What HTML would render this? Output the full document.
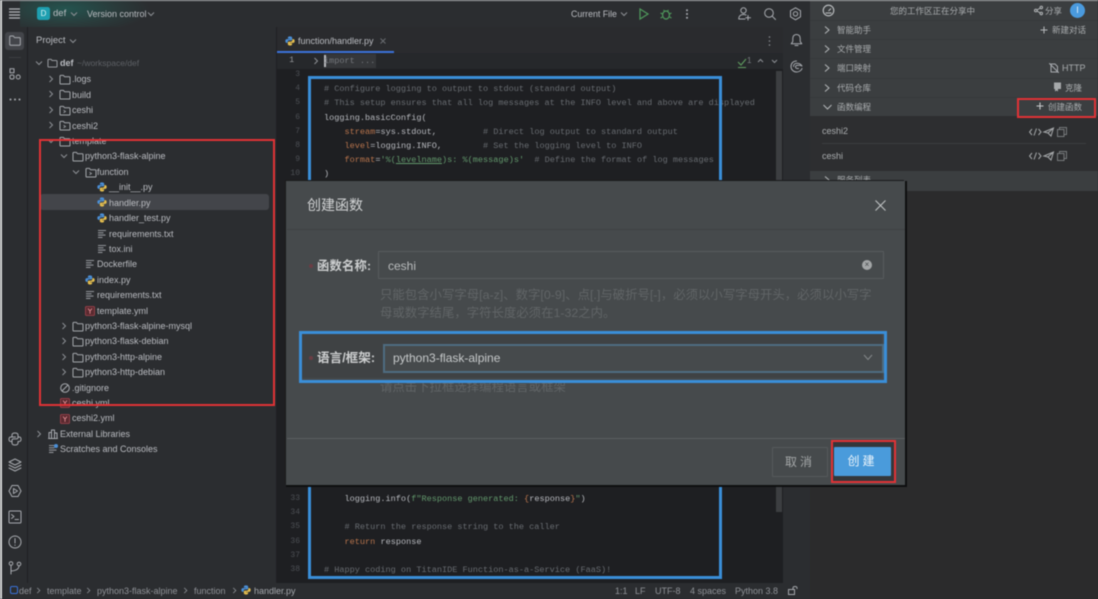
<!DOCTYPE html>
<html lang="zh">
<head>
<meta charset="utf-8">
<title>创建函数</title>
<style>
html,body{margin:0;padding:0;background:#2b2d30;overflow:hidden}
#r{position:relative;width:1098px;height:599px;overflow:hidden;background:#2b2d30;font-family:"Liberation Sans","Noto Sans CJK SC",sans-serif;color:#bcbec4;filter:blur(.4px)}
#r div,#r span.a,#r svg.a{position:absolute}
.t{font-size:9px;line-height:12px;height:12px;white-space:nowrap;color:#babcc1}
.c{font-family:"Liberation Mono",monospace;font-size:8.55px;line-height:12px;height:12px;white-space:pre;color:#b8babf}
.g{color:#686c71}.o{color:#b8744c}.s{color:#62986c}
.n{font-family:"Liberation Mono",monospace;font-size:8px;line-height:12px;height:12px;color:#4c4f54;width:20px;text-align:right;left:280px}
.z{font-size:8.5px;line-height:14px;height:14px;white-space:nowrap;color:#a9acae}
.l{font-size:9px}
svg{overflow:visible}
.ic{fill:none;stroke:#a8abb0;stroke-width:1;stroke-linecap:round;stroke-linejoin:round}
</style>
</head>
<body>
<div id="r">
<svg width="0" height="0" style="position:absolute">
<symbol id="py" viewBox="0 0 12 12"><path d="M6 .5C4 .5 3.5 1.2 3.5 2.2V3.3H6.2V3.8H2.2C1 3.8.4 4.7.4 6S1 8.3 2.2 8.3H3.2V7C3.2 5.9 4 5.3 5 5.3H7.3C8 5.3 8.6 4.8 8.6 4V2.2C8.6 1.2 7.8.5 6 .5Z" fill="#4b8fd6"/><path d="M6 11.5C8 11.5 8.5 10.8 8.5 9.8V8.7H5.8V8.2H9.8C11 8.2 11.6 7.3 11.6 6S11 3.7 9.8 3.7H8.8V5C8.8 6.1 8 6.7 7 6.7H4.7C4 6.7 3.4 7.2 3.4 8V9.8C3.4 10.8 4.2 11.5 6 11.5Z" fill="#e3bd4f"/></symbol>
<symbol id="fo" viewBox="0 0 12 11"><path d="M1 3V9.2C1 9.7 1.3 10 1.8 10H10.2C10.7 10 11 9.7 11 9.2V3.6C11 3.1 10.7 2.8 10.2 2.8H5.6L4.4 1.4H1.8C1.3 1.4 1 1.7 1 2.2Z" fill="none" stroke="#a4a7ac" stroke-width="1"/></symbol>
<symbol id="fp" viewBox="0 0 12 11"><path d="M1 3V9.2C1 9.7 1.3 10 1.8 10H10.2C10.7 10 11 9.7 11 9.2V3.6C11 3.1 10.7 2.8 10.2 2.8H5.6L4.4 1.4H1.8C1.3 1.4 1 1.7 1 2.2Z" fill="none" stroke="#a4a7ac" stroke-width="1"/><path d="M4.5 5.2L6.5 6.5L4.5 7.8" fill="none" stroke="#a4a7ac" stroke-width=".8"/></symbol>
<symbol id="tx" viewBox="0 0 10 10"><path d="M1 1.5H9M1 3.8H6.5M1 6.1H8.5M1 8.4H5.5" fill="none" stroke="#8f9297" stroke-width="1.1"/></symbol>
<symbol id="ya" viewBox="0 0 10 10"><rect x=".5" y=".5" width="9" height="9" rx="1" fill="#5a2a30" stroke="#a8454f" stroke-width=".8"/><path d="M3 2.5L5 5L7 2.5M5 5V7.8" fill="none" stroke="#e08a90" stroke-width=".9"/></symbol>
<symbol id="ar" viewBox="0 0 8 8"><path d="M2.5 1L5.5 4L2.5 7" fill="none" stroke="#8d9095" stroke-width="1"/></symbol>
<symbol id="dn" viewBox="0 0 8 8"><path d="M1 2.5L4 5.5L7 2.5" fill="none" stroke="#8d9095" stroke-width="1"/></symbol>
<symbol id="tools" viewBox="0 0 38 10"><path d="M3 2L.5 5L3 8M7.5 1.5L5 8.5M9.5 2L12 5L9.5 8" fill="none" stroke="#a6a9ab" stroke-width="1"/><path d="M15 5L24.5 1L22 9L19 6ZM19 6L24.5 1" fill="none" stroke="#a6a9ab" stroke-width="1"/><rect x="28.5" y="2.5" width="6.5" height="7" fill="none" stroke="#777a7c" stroke-width="1"/><path d="M30.5 2.5V.5H37.5V7.5H35" fill="none" stroke="#777a7c" stroke-width="1"/></symbol>
</svg>

<!-- edges -->
<div style="left:0;top:0;width:1098px;height:1px;background:#a9abad"></div>
<div style="left:0;top:0;width:2px;height:599px;background:#d8d9da"></div>

<!-- toolbar -->
<div style="left:2px;top:1px;width:808px;height:26px;background:#2b2d30"></div>
<div style="left:20px;top:1px;width:170px;height:26px;background:radial-gradient(ellipse 85px 26px at 45px 8px,#24544f 0%,#2a3b3b 60%,#2b2d30 100%)"></div>
<svg class="a" style="left:9px;top:8px" width="11" height="11"><path d="M0 1H11M0 4H11M0 7H11M0 10H11" stroke="#b5b7bb" stroke-width="1.2"/></svg>
<div style="left:37px;top:7px;width:13px;height:13px;border-radius:2.5px;background:#1e9fb0;color:#d7f4f6;font-size:8px;line-height:13px;text-align:center">D</div>
<div class="t" style="left:53px;top:8px;font-size:9.5px">def</div>
<svg class="a" style="left:70px;top:10px" width="8" height="8"><use href="#dn"/></svg>
<div class="t" style="left:87px;top:8px;font-size:9px">Version control</div>
<svg class="a" style="left:147px;top:10px" width="8" height="8"><use href="#dn"/></svg>
<div class="t" style="left:571px;top:8px;font-size:8.8px">Current File</div>
<svg class="a" style="left:620px;top:10px" width="8" height="8"><use href="#dn"/></svg>
<svg class="a" style="left:639px;top:8px" width="10" height="12"><path d="M1 1L9 6L1 11Z" fill="none" stroke="#4f9a5c" stroke-width="1.2"/></svg>
<svg class="a" style="left:660px;top:8px" width="12" height="12"><ellipse cx="6" cy="7" rx="3.4" ry="4" fill="none" stroke="#4f9a5c" stroke-width="1.2"/><path d="M3.5 2L5 3.5M8.5 2L7 3.5M.5 5L2.5 6M11.5 5L9.5 6M.5 10L2.5 9M11.5 10L9.5 9" stroke="#4f9a5c" stroke-width="1"/></svg>
<svg class="a" style="left:685px;top:9px" width="4" height="10"><circle cx="2" cy="1.2" r="1" fill="#a8abb0"/><circle cx="2" cy="5" r="1" fill="#a8abb0"/><circle cx="2" cy="8.8" r="1" fill="#a8abb0"/></svg>
<svg class="a ic" style="left:738px;top:7px" width="13" height="14"><circle cx="5.5" cy="3.5" r="2.7"/><path d="M.8 12C.8 8.8 3 7.5 5.5 7.5C6.5 7.5 7.4 7.7 8 8M.8 12H7M10 8.5V13M7.8 10.8H12.5"/></svg>
<svg class="a ic" style="left:764px;top:8px" width="12" height="12"><circle cx="5" cy="5" r="4.3"/><path d="M8.2 8.2L11.5 11.5"/></svg>
<svg class="a ic" style="left:789px;top:7px" width="13" height="14"><path d="M6.5 .8L11.5 3.7V9.8L6.5 12.8L1.5 9.8V3.7Z"/><circle cx="6.5" cy="6.8" r="2.2"/></svg>

<!-- left stripe -->
<div style="left:5px;top:32px;width:19px;height:18px;border-radius:3px;background:#43454a"></div>
<svg class="a ic" style="left:9px;top:35px" width="12" height="11"><path d="M.7 2V9.3C.7 9.8 1 10.2 1.6 10.2H10.4C11 10.2 11.3 9.8 11.3 9.3V3.5C11.3 3 11 2.6 10.4 2.6H5.5L4.4 1H1.6C1 1 .7 1.4 .7 2Z"/></svg>
<div style="left:9px;top:57px;width:12px;height:1px;background:#3c3e42"></div>
<svg class="a ic" style="left:9px;top:68px" width="12" height="12"><rect x="1" y=".7" width="4" height="4"/><rect x="1" y="7" width="4" height="4" rx="1.5"/><rect x="7.2" y="7" width="4" height="4" rx="2"/></svg>
<svg class="a" style="left:9px;top:98px" width="12" height="3"><circle cx="1.5" cy="1.5" r="1" fill="#a8abb0"/><circle cx="6" cy="1.5" r="1" fill="#a8abb0"/><circle cx="10.5" cy="1.5" r="1" fill="#a8abb0"/></svg>
<svg class="a ic" style="left:8px;top:432px" width="14" height="14"><path d="M7 1C4.5 1 4 2 4 3V5H7.5M10 5V3C10 2 9.5 1 7 1M4 5H2.8C1.5 5 1 6 1 7.3S1.5 9.5 2.8 9.5H4V8.3C4 7.4 4.6 6.9 5.5 6.9H8.5C9.4 6.9 10 6.4 10 5.5V5H11.2C12.5 5 13 6 13 7.3S12.5 9.5 11.2 9.5H10M10 9.5V11C10 12 9.5 13 7 13S4 12 4 11V9.5"/></svg>
<svg class="a ic" style="left:8px;top:458px" width="14" height="14"><path d="M7 1L13 4L7 7L1 4ZM1 7L7 10L13 7M1 10L7 13L13 10"/></svg>
<svg class="a ic" style="left:8px;top:484px" width="14" height="14"><path d="M4 1.5H10L13 7L10 12.5H4L1 7Z"/><path d="M5.5 4.5L9.5 7L5.5 9.5Z"/></svg>
<svg class="a ic" style="left:8px;top:510px" width="14" height="14"><rect x="1" y="1" width="12" height="12" rx="1"/><path d="M3.5 4.5L6 6.5L3.5 8.5M7 9.5H10.5"/></svg>
<svg class="a ic" style="left:8px;top:535px" width="14" height="14"><circle cx="7" cy="7" r="6"/><path d="M7 3.5V8M7 10V10.4"/></svg>
<svg class="a ic" style="left:8px;top:561px" width="14" height="14"><circle cx="3" cy="2.5" r="1.8"/><circle cx="11" cy="3" r="1.8"/><path d="M3 4.3V13M3 10C6 10 11 9 11 4.8"/></svg>

<!-- project panel -->
<div style="left:27px;top:27px;width:1px;height:556px;background:#1f2023"></div>
<div style="left:276px;top:27px;width:1px;height:556px;background:#1f2023"></div>
<div class="t" style="left:36px;top:35px;font-size:9.5px">Project</div>
<svg class="a" style="left:69px;top:37px" width="8" height="8"><use href="#dn"/></svg>

<div style="left:40px;top:194px;width:229px;height:16px;border-radius:3px;background:#43454a"></div>

<svg class="a" style="left:35px;top:59px" width="8" height="8"><use href="#dn"/></svg>
<svg class="a" style="left:47px;top:58px" width="11" height="10"><use href="#fo"/></svg>
<div class="t" style="left:60px;top:57px;font-weight:bold">def</div>
<div class="t" style="left:77px;top:57px;color:#5d6065;font-size:8.5px">~/workspace/def</div>

<svg class="a" style="left:47px;top:75px" width="8" height="8"><use href="#ar"/></svg>
<svg class="a" style="left:59px;top:74px" width="12" height="11"><use href="#fo"/></svg>
<div class="t" style="left:72px;top:73px">.logs</div>
<svg class="a" style="left:47px;top:90px" width="8" height="8"><use href="#ar"/></svg>
<svg class="a" style="left:59px;top:89px" width="12" height="11"><use href="#fo"/></svg>
<div class="t" style="left:72px;top:89px">build</div>
<svg class="a" style="left:47px;top:106px" width="8" height="8"><use href="#ar"/></svg>
<svg class="a" style="left:59px;top:105px" width="12" height="11"><use href="#fp"/></svg>
<div class="t" style="left:72px;top:104px">ceshi</div>
<svg class="a" style="left:47px;top:121px" width="8" height="8"><use href="#ar"/></svg>
<svg class="a" style="left:59px;top:120px" width="12" height="11"><use href="#fp"/></svg>
<div class="t" style="left:72px;top:120px">ceshi2</div>
<svg class="a" style="left:47px;top:137px" width="8" height="8"><use href="#dn"/></svg>
<svg class="a" style="left:59px;top:136px" width="12" height="11"><use href="#fo"/></svg>
<div class="t" style="left:72px;top:135px">template</div>
<svg class="a" style="left:60px;top:152px" width="8" height="8"><use href="#dn"/></svg>
<svg class="a" style="left:72px;top:151px" width="12" height="11"><use href="#fo"/></svg>
<div class="t" style="left:85px;top:150px">python3-flask-alpine</div>
<svg class="a" style="left:72px;top:168px" width="8" height="8"><use href="#dn"/></svg>
<svg class="a" style="left:85px;top:167px" width="12" height="11"><use href="#fp"/></svg>
<div class="t" style="left:97px;top:166px">function</div>
<svg class="a" style="left:97px;top:182px" width="10" height="10"><use href="#py"/></svg>
<div class="t" style="left:109px;top:181px">__init__.py</div>
<svg class="a" style="left:97px;top:197px" width="10" height="10"><use href="#py"/></svg>
<div class="t" style="left:109px;top:197px">handler.py</div>
<svg class="a" style="left:97px;top:213px" width="10" height="10"><use href="#py"/></svg>
<div class="t" style="left:109px;top:212px">handler_test.py</div>
<svg class="a" style="left:97px;top:229px" width="10" height="10"><use href="#tx"/></svg>
<div class="t" style="left:109px;top:228px">requirements.txt</div>
<svg class="a" style="left:97px;top:244px" width="10" height="10"><use href="#tx"/></svg>
<div class="t" style="left:109px;top:243px">tox.ini</div>
<svg class="a" style="left:85px;top:259px" width="10" height="10"><use href="#tx"/></svg>
<div class="t" style="left:97px;top:258px">Dockerfile</div>
<svg class="a" style="left:85px;top:275px" width="10" height="10"><use href="#py"/></svg>
<div class="t" style="left:97px;top:274px">index.py</div>
<svg class="a" style="left:85px;top:290px" width="10" height="10"><use href="#tx"/></svg>
<div class="t" style="left:97px;top:289px">requirements.txt</div>
<svg class="a" style="left:85px;top:306px" width="10" height="10"><use href="#ya"/></svg>
<div class="t" style="left:97px;top:305px">template.yml</div>
<svg class="a" style="left:60px;top:322px" width="8" height="8"><use href="#ar"/></svg>
<svg class="a" style="left:72px;top:321px" width="12" height="11"><use href="#fo"/></svg>
<div class="t" style="left:85px;top:320px">python3-flask-alpine-mysql</div>
<svg class="a" style="left:60px;top:337px" width="8" height="8"><use href="#ar"/></svg>
<svg class="a" style="left:72px;top:336px" width="12" height="11"><use href="#fo"/></svg>
<div class="t" style="left:85px;top:335px">python3-flask-debian</div>
<svg class="a" style="left:60px;top:353px" width="8" height="8"><use href="#ar"/></svg>
<svg class="a" style="left:72px;top:352px" width="12" height="11"><use href="#fo"/></svg>
<div class="t" style="left:85px;top:351px">python3-http-alpine</div>
<svg class="a" style="left:60px;top:368px" width="8" height="8"><use href="#ar"/></svg>
<svg class="a" style="left:72px;top:367px" width="12" height="11"><use href="#fo"/></svg>
<div class="t" style="left:85px;top:366px">python3-http-debian</div>
<svg class="a ic" style="left:60px;top:383px" width="10" height="10"><circle cx="5" cy="5" r="4.3"/><path d="M2 8L8 2"/></svg>
<div class="t" style="left:72px;top:382px">.gitignore</div>
<svg class="a" style="left:60px;top:398px" width="10" height="10"><use href="#ya"/></svg>
<div class="t" style="left:72px;top:397px">ceshi.yml</div>
<svg class="a" style="left:60px;top:414px" width="10" height="10"><use href="#ya"/></svg>
<div class="t" style="left:72px;top:412px">ceshi2.yml</div>
<svg class="a" style="left:35px;top:430px" width="8" height="8"><use href="#ar"/></svg>
<svg class="a ic" style="left:48px;top:429px" width="10" height="10"><path d="M1 9V3.5H3.5V9M3.5 9V1H6.5V9M6.5 9V4H9V9M.5 9.5H9.5"/></svg>
<div class="t" style="left:60px;top:428px">External Libraries</div>
<svg class="a" style="left:48px;top:444px" width="10" height="10"><use href="#tx"/><circle cx="8" cy="2" r="2" fill="#4b8fd6"/></svg>
<div class="t" style="left:60px;top:443px">Scratches and Consoles</div>

<!-- editor -->
<div style="left:277px;top:27px;width:506px;height:26px;background:#2a2b2e"></div>
<svg class="a" style="left:285px;top:36px" width="10" height="10"><use href="#py"/></svg>
<div class="t" style="left:298px;top:35px">function/handler.py</div>
<svg class="a" style="left:380px;top:38px" width="6" height="6"><path d="M.5 .5L5.5 5.5M5.5 .5L.5 5.5" stroke="#6c6f74" stroke-width=".9"/></svg>
<div style="left:277px;top:51px;width:117px;height:2px;background:#3b72d9"></div>
<svg class="a" style="left:768px;top:36px" width="3" height="10"><circle cx="1.5" cy="1" r=".8" fill="#8d9095"/><circle cx="1.5" cy="5" r=".8" fill="#8d9095"/><circle cx="1.5" cy="9" r=".8" fill="#8d9095"/></svg>
<div style="left:277px;top:53px;width:506px;height:530px;background:#1e1f22"></div>
<div style="left:277px;top:53px;width:506px;height:16px;background:#26282b"></div>
<div class="n" style="left:278px;top:55px;width:16px;color:#9a9ca0">1</div>
<svg class="a" style="left:312px;top:57px" width="8" height="8"><use href="#ar"/></svg>
<div style="left:324px;top:54px;width:52px;height:14px;background:#35373a"></div>
<div style="left:324px;top:55px;width:1.5px;height:12px;background:#b7b9bd"></div>
<div class="c g" style="left:324px;top:55px;color:#74777c">import ...</div>
<svg class="a" style="left:737px;top:58px" width="13" height="11"><path d="M1 4L4 7L9 1M1 9.5H9" fill="none" stroke="#5f9a5f" stroke-width="1.1"/></svg>
<div class="t" style="left:747px;top:55px;font-size:8px;color:#7a7d82">1</div>
<svg class="a" style="left:757px;top:58px" width="7" height="6"><path d="M1 4L3.5 1.5L6 4" fill="none" stroke="#8d9095"/></svg>
<svg class="a" style="left:771px;top:58px" width="7" height="6"><path d="M1 2L3.5 4.5L6 2" fill="none" stroke="#8d9095"/></svg>
<div style="left:776px;top:71px;width:6px;height:441px;background:#3c3e41"></div>

<div class="n" style="top:69px">3</div>
<div class="n" style="top:83px">4</div>
<div class="c g" style="left:324px;top:83px"># Configure logging to output to stdout (standard output)</div>
<div class="n" style="top:97px">5</div>
<div class="c g" style="left:324px;top:97px"># This setup ensures that all log messages at the INFO level and above are displayed</div>
<div class="n" style="top:112px">6</div>
<div class="c" style="left:324px;top:112px">logging.basicConfig(</div>
<div class="n" style="top:126px">7</div>
<div class="c" style="left:324px;top:126px">    <span class="o">stream</span>=sys.stdout,         <span class="g"># Direct log output to standard output</span></div>
<div class="n" style="top:140px">8</div>
<div class="c" style="left:324px;top:140px">    <span class="o">level</span>=logging.INFO,        <span class="g"># Set the logging level to INFO</span></div>
<div class="n" style="top:154px">9</div>
<div class="c" style="left:324px;top:154px">    <span class="o">format</span>=<span class="s">'%(<u>levelname</u>)s: %(message)s'</span>  <span class="g"># Define the format of log messages</span></div>
<div class="n" style="top:168px">10</div>
<div class="c" style="left:324px;top:168px">)</div>

<div class="n" style="top:493px">33</div>
<div class="c" style="left:324px;top:493px">    logging.info(<span class="s">f"Response generated: </span><span class="o">{</span>response<span class="o">}</span><span class="s">"</span>)</div>
<div class="n" style="top:507px">34</div>
<div class="n" style="top:521px">35</div>
<div class="c g" style="left:324px;top:521px">    # Return the response string to the caller</div>
<div class="n" style="top:536px">36</div>
<div class="c" style="left:324px;top:536px">    <span class="o">return</span> response</div>
<div class="n" style="top:550px">37</div>
<div class="n" style="top:564px">38</div>
<div class="c g" style="left:324px;top:564px"># Happy coding on TitanIDE Function-as-a-Service (FaaS)!</div>

<!-- blue editor box -->
<div style="left:308px;top:76px;width:408px;height:497px;border:3px solid #3a8ed8"></div>

<!-- right stripe -->
<div style="left:783px;top:27px;width:27px;height:556px;background:#2b2d30"></div>
<svg class="a ic" style="left:790px;top:33px" width="13" height="14"><path d="M6.5 1.5C4 1.5 2.8 3.2 2.8 5.5V8.5L1.2 10.8H11.8L10.2 8.5V5.5C10.2 3.2 9 1.5 6.5 1.5ZM5 12.5H8"/></svg>
<svg class="a ic" style="left:790px;top:60px" width="13" height="13"><path d="M6.5 1C3 1 1 3.5 1 6.5S3.5 12 6.5 12C9 12 11.5 10.5 12 8.5M3.5 6.5C3.5 4.5 5 3.2 7 3.2S11 4.3 12 6C11 5.5 10 5.3 8.5 5.3C6.5 5.3 5.5 6 5.5 7C5.5 8.2 7 8.7 8.5 8.5"/></svg>

<!-- right panel -->
<div style="left:810px;top:1px;width:288px;height:115px;background:#3b3e40"></div>
<div style="left:810px;top:116px;width:288px;height:55px;background:#2d2e30"></div>
<div style="left:810px;top:171px;width:288px;height:20px;background:#3b3e40"></div>
<div style="left:810px;top:191px;width:288px;height:408px;background:#2b2b2c"></div>
<div style="left:810px;top:20px;width:288px;height:1px;background:#36393b"></div>
<div style="left:810px;top:39px;width:288px;height:1px;background:#36393b"></div>
<div style="left:810px;top:58px;width:288px;height:1px;background:#36393b"></div>
<div style="left:810px;top:78px;width:288px;height:1px;background:#36393b"></div>
<div style="left:810px;top:97px;width:288px;height:1px;background:#36393b"></div>
<svg class="a" style="left:822px;top:4px" width="13" height="13"><circle cx="6.5" cy="6.5" r="5.3" fill="none" stroke="#bfc2c4" stroke-width="1.1"/><path d="M3.5 9H9.5M6.5 7L9 4.5" stroke="#bfc2c4" stroke-width="1"/></svg>
<div class="z" style="left:890px;top:4px">您的工作区正在分享中</div>
<svg class="a" style="left:1034px;top:6px" width="9" height="9"><circle cx="1.8" cy="4.5" r="1.3" fill="none" stroke="#b5b8ba"/><circle cx="7.3" cy="1.5" r="1.2" fill="none" stroke="#b5b8ba"/><circle cx="7.3" cy="7.5" r="1.2" fill="none" stroke="#b5b8ba"/><path d="M3 4L6.2 2M3 5L6.2 7" stroke="#b5b8ba" stroke-width=".9"/></svg>
<div class="z" style="left:1045px;top:4px">分享</div>
<div style="left:1070px;top:3px;width:15px;height:15px;border-radius:50%;background:#4a9ade;color:#e5f2fb;font-size:9px;line-height:15px;text-align:center">I</div>

<svg class="a" style="left:823px;top:26px" width="8" height="8"><path d="M2 .5L6 4L2 7.5" fill="none" stroke="#b5b8ba"/></svg>
<div class="z" style="left:837px;top:23px">智能助手</div>
<svg class="a" style="left:1040px;top:26px" width="8" height="8"><path d="M4 .5V7.5M.5 4H7.5" stroke="#b5b8ba"/></svg>
<div class="z" style="left:1052px;top:23px">新建对话</div>
<svg class="a" style="left:823px;top:45px" width="8" height="8"><path d="M2 .5L6 4L2 7.5" fill="none" stroke="#b5b8ba"/></svg>
<div class="z" style="left:837px;top:42px">文件管理</div>
<svg class="a" style="left:823px;top:64px" width="8" height="8"><path d="M2 .5L6 4L2 7.5" fill="none" stroke="#b5b8ba"/></svg>
<div class="z" style="left:837px;top:61px">端口映射</div>
<svg class="a ic" style="left:1049px;top:63px" width="10" height="10"><path d="M2 1H6L8.5 3.5V9H2ZM.5 .5L9.5 9.5"/></svg>
<div class="z l" style="left:1062px;top:61px">HTTP</div>
<svg class="a" style="left:823px;top:84px" width="8" height="8"><path d="M2 .5L6 4L2 7.5" fill="none" stroke="#b5b8ba"/></svg>
<div class="z" style="left:837px;top:81px">代码仓库</div>
<svg class="a" style="left:1053px;top:82px" width="9" height="10"><path d="M1 .5H8V7H5V9.5L3.5 8.5L2 9.5V7H1Z" fill="#a6a9ab"/></svg>
<div class="z" style="left:1065px;top:81px">克隆</div>
<svg class="a" style="left:823px;top:103px" width="9" height="8"><path d="M.5 2L4.5 6L8.5 2" fill="none" stroke="#b5b8ba"/></svg>
<div class="z" style="left:837px;top:100px">函数编程</div>
<svg class="a" style="left:1036px;top:102px" width="8" height="8"><path d="M4 .5V7.5M.5 4H7.5" stroke="#c8cacc" stroke-width="1.1"/></svg>
<div class="z" style="left:1048px;top:100px">创建函数</div>
<div style="left:1017px;top:98px;width:75px;height:16px;border:2.5px solid #e03236"></div>

<div class="z l" style="left:822px;top:124px">ceshi2</div>
<svg class="a" style="left:1029px;top:127px" width="38" height="10"><use href="#tools"/></svg>
<div style="left:822px;top:143px;width:264px;height:1px;background:#3b3d3f"></div>
<div class="z l" style="left:822px;top:149px">ceshi</div>
<svg class="a" style="left:1029px;top:151px" width="38" height="10"><use href="#tools"/></svg>
<svg class="a" style="left:823px;top:176px" width="8" height="8"><path d="M2 .5L6 4L2 7.5" fill="none" stroke="#b5b8ba"/></svg>
<div class="z" style="left:837px;top:173px">服务列表</div>

<!-- status bar -->
<div style="left:2px;top:583px;width:808px;height:16px;background:#2b2d30"></div>
<div class="t" style="left:10px;top:586px;width:6px;height:6px;border:1px solid #3a72d9;border-radius:2px"></div>
<div class="t" style="left:19px;top:585px;color:#8f9297">def</div>
<svg class="a" style="left:35px;top:587px" width="7" height="7"><use href="#ar"/></svg>
<div class="t" style="left:47px;top:585px;color:#8f9297">template</div>
<svg class="a" style="left:85px;top:587px" width="7" height="7"><use href="#ar"/></svg>
<div class="t" style="left:97px;top:585px;color:#8f9297">python3-flask-alpine</div>
<svg class="a" style="left:182px;top:587px" width="7" height="7"><use href="#ar"/></svg>
<div class="t" style="left:194px;top:585px;color:#8f9297">function</div>
<svg class="a" style="left:231px;top:587px" width="7" height="7"><use href="#ar"/></svg>
<svg class="a" style="left:241px;top:585px" width="10" height="10"><use href="#py"/></svg>
<div class="t" style="left:254px;top:585px;color:#a4a7ac">handler.py</div>
<div class="t" style="left:615px;top:585px;color:#8f9297">1:1</div>
<div class="t" style="left:635px;top:585px;color:#8f9297">LF</div>
<div class="t" style="left:655px;top:585px;color:#8f9297">UTF-8</div>
<div class="t" style="left:690px;top:585px;color:#8f9297">4 spaces</div>
<div class="t" style="left:735px;top:585px;color:#8f9297">Python 3.8</div>
<svg class="a" style="left:788px;top:586px" width="10" height="9"><rect x=".5" y="3.5" width="6" height="5" fill="none" stroke="#a4a7ac"/><path d="M5 3.5V2C5 1 6 .5 7 .5S9 1 9 2V3" fill="none" stroke="#a4a7ac"/></svg>

<!-- modal -->
<div style="left:286px;top:181px;width:619px;height:304px;background:#464a4c;box-shadow:1px 1px 0 1px #0e0f10,-1px -1px 0 #1a1b1c"></div>
<div style="left:287px;top:229px;width:618px;height:1px;background:#3f4244"></div>
<div style="left:287px;top:438px;width:618px;height:1px;background:#5a5e60"></div>
<div style="left:307px;top:195px;font-size:14px;line-height:20px;color:#d2d4d5;white-space:nowrap">创建函数</div>
<svg class="a" style="left:875px;top:200px" width="11" height="11"><path d="M.5 .5L10.5 10.5M10.5 .5L.5 10.5" stroke="#bfc2c3" stroke-width="1.1"/></svg>

<div style="left:309px;top:264px;width:4px;height:4px;border-radius:50%;background:#6b3d44"></div>
<div style="left:317px;top:258px;font-size:12.3px;line-height:17px;color:#cdcfd0;font-weight:bold;white-space:nowrap;letter-spacing:.2px">函数名称:</div>
<div style="left:378px;top:251px;width:504px;height:26px;border:1px solid #585c5e;border-radius:1px"></div>
<div style="left:388px;top:258px;font-size:12px;line-height:16px;color:#b9bcbd">ceshi</div>
<div style="left:862px;top:260px;width:10px;height:10px;border-radius:50%;background:#a3a6a7;color:#464a4c;font-size:8px;line-height:10px;text-align:center">×</div>

<div style="left:380px;top:286px;font-size:12.4px;line-height:18px;color:#616567;white-space:nowrap">只能包含小写字母[a-z]、数字[0-9]、点[.]与破折号[-]，必须以小写字母开头，必须以小写字</div>
<div style="left:380px;top:304px;font-size:12.4px;line-height:18px;color:#616567;white-space:nowrap">母或数字结尾，字符长度必须在1-32之内。</div>

<div style="left:380px;top:379px;font-size:12.4px;line-height:17px;color:#616567;white-space:nowrap">请点击下拉框选择编程语言或框架</div>

<div style="left:300px;top:332px;width:582px;height:46px;background:#3f4244"></div>
<div style="left:383px;top:344px;width:497px;height:25px;border:2px solid #4e6c80;background:#464a4c"></div>
<div style="left:299px;top:331px;width:582px;height:46px;border:3.5px solid #3a8ed8"></div>
<div style="left:309px;top:356px;width:4px;height:4px;border-radius:50%;background:#6b3d44"></div>
<div style="left:317px;top:350px;font-size:12.6px;line-height:17px;color:#cdcfd0;font-weight:bold;white-space:nowrap">语言/框架:</div>
<div style="left:393px;top:350px;font-size:12px;line-height:17px;color:#c6c9ca;white-space:nowrap">python3-flask-alpine</div>
<svg class="a" style="left:863px;top:354px" width="10" height="7"><path d="M1 1L5 5.5L9 1" fill="none" stroke="#85898b" stroke-width="1"/></svg>

<div style="left:772px;top:447px;width:54px;height:28px;border:1px solid #55595b;color:#a3a6a7;font-size:12px;line-height:28px;text-align:center;letter-spacing:3px;border-radius:1px">取消</div>
<div style="left:831px;top:440px;width:61px;height:39px;border:2.5px solid #e03236;background:#34373a"></div>
<div style="left:834px;top:447px;width:57px;height:29px;background:#4a9bdb;color:#ecf5fb;font-size:12px;line-height:29px;text-align:center;letter-spacing:3px;border-radius:1px">创建</div>

<!-- red tree box -->
<div style="left:39px;top:139px;width:232px;height:263px;border:2.5px solid #e03236"></div>
</div>
</body>
</html>
